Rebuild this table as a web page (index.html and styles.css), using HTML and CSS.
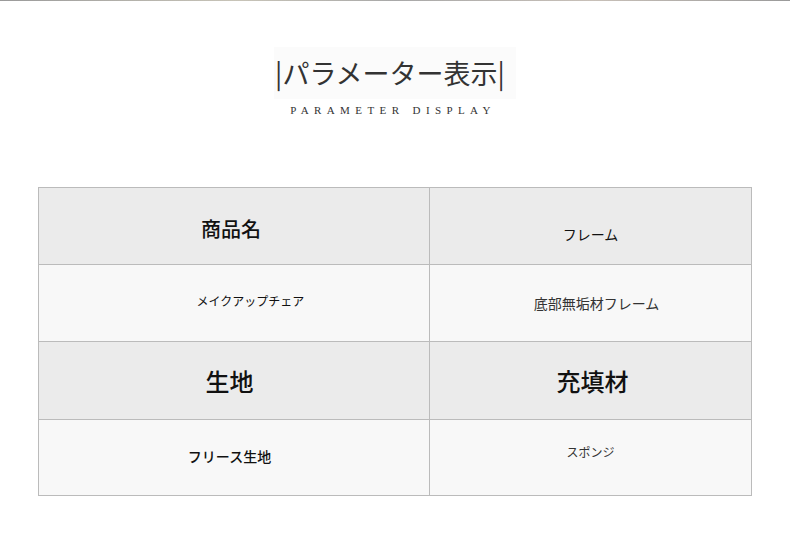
FILE: index.html
```html
<!DOCTYPE html>
<html lang="ja">
<head>
<meta charset="utf-8">
<link rel="stylesheet" href="styles.css">
</head>
<body>
<div class="topline"></div>
<header class="heading">
  <div class="title">|パラメーター表示|</div>
  <div class="subtitle">PARAMETER DISPLAY</div>
</header>
<section class="table">
  <div class="cell head c1"><span class="t-name">商品名</span></div>
  <div class="cell head c2"><span class="t-frame">フレーム</span></div>
  <div class="cell data c3"><span class="t-chair">メイクアップチェア</span></div>
  <div class="cell data c4"><span class="t-wood">底部無垢材フレーム</span></div>
  <div class="cell head c5"><span class="t-fabric">生地</span></div>
  <div class="cell head c6"><span class="t-fill">充填材</span></div>
  <div class="cell data c7"><span class="t-fleece">フリース生地</span></div>
  <div class="cell data c8"><span class="t-sponge">スポンジ</span></div>
</section>
</body>
</html>
```
FILE: styles.css
```css
html, body {
  margin: 0;
  padding: 0;
  background: #ffffff;
  font-family: "Noto Sans CJK JP", "Noto Sans", sans-serif;
  color: #222;
}
.topline {
  height: 1px;
  background: linear-gradient(90deg, #9a9a9a, #c8c4b8 30%, #a8a8a8 50%, #c8c0b8 75%, #9a9a9a);
}
.heading {
  display: flex;
  flex-direction: column;
  align-items: center;
  padding-top: 46px;
}
.title {
  font-size: 27px;
  line-height: 52px;
  color: #333;
  background: #fbfbfb;
  padding: 0 11px 0 1px;
}
.subtitle {
  margin-top: 5px;
  font-family: "Liberation Serif", serif;
  font-size: 11px;
  letter-spacing: 5.4px;
  color: #333;
  padding-right: 4px;
}
.table {
  margin: 71px 0 0 38px;
  width: 712px;
  display: grid;
  grid-template-columns: 390px 321px;
  grid-template-rows: 76px 76px 77px 75px;
  border: 1px solid #bbbbbb;
  background: #bbbbbb;
  gap: 1px;
}
.cell {
  display: flex;
  align-items: center;
  justify-content: center;
  box-sizing: border-box;
}
.head { background: #ebebeb; }
.data { background: #f8f8f8; }
.t-name { font-size: 20px; font-weight: 500; color: #111; }
.t-frame { font-size: 14px; font-weight: 400; color: #111; }
.t-chair { font-size: 12px; color: #111; }
.t-wood { font-size: 14px; color: #333; }
.t-fabric { font-size: 24px; font-weight: 500; color: #111; }
.t-fill { font-size: 24px; font-weight: 500; color: #111; }
.t-fleece { font-size: 14px; font-weight: 500; color: #111; }
.t-sponge { font-size: 12px; color: #333; }
.c1 { padding: 5px 6px 0 0; }
.c2 { padding: 15px 0 0 0; }
.c3 { padding: 0 0 5px 33px; }
.c4 { padding: 0 0 1px 12px; }
.c5 { padding: 0 9px 0 0; }
.c6 { padding: 0 0 0 4px; }
.c7 { padding: 0 9px 4px 0; }
.c8 { padding: 0 0 12px 0; }
```
